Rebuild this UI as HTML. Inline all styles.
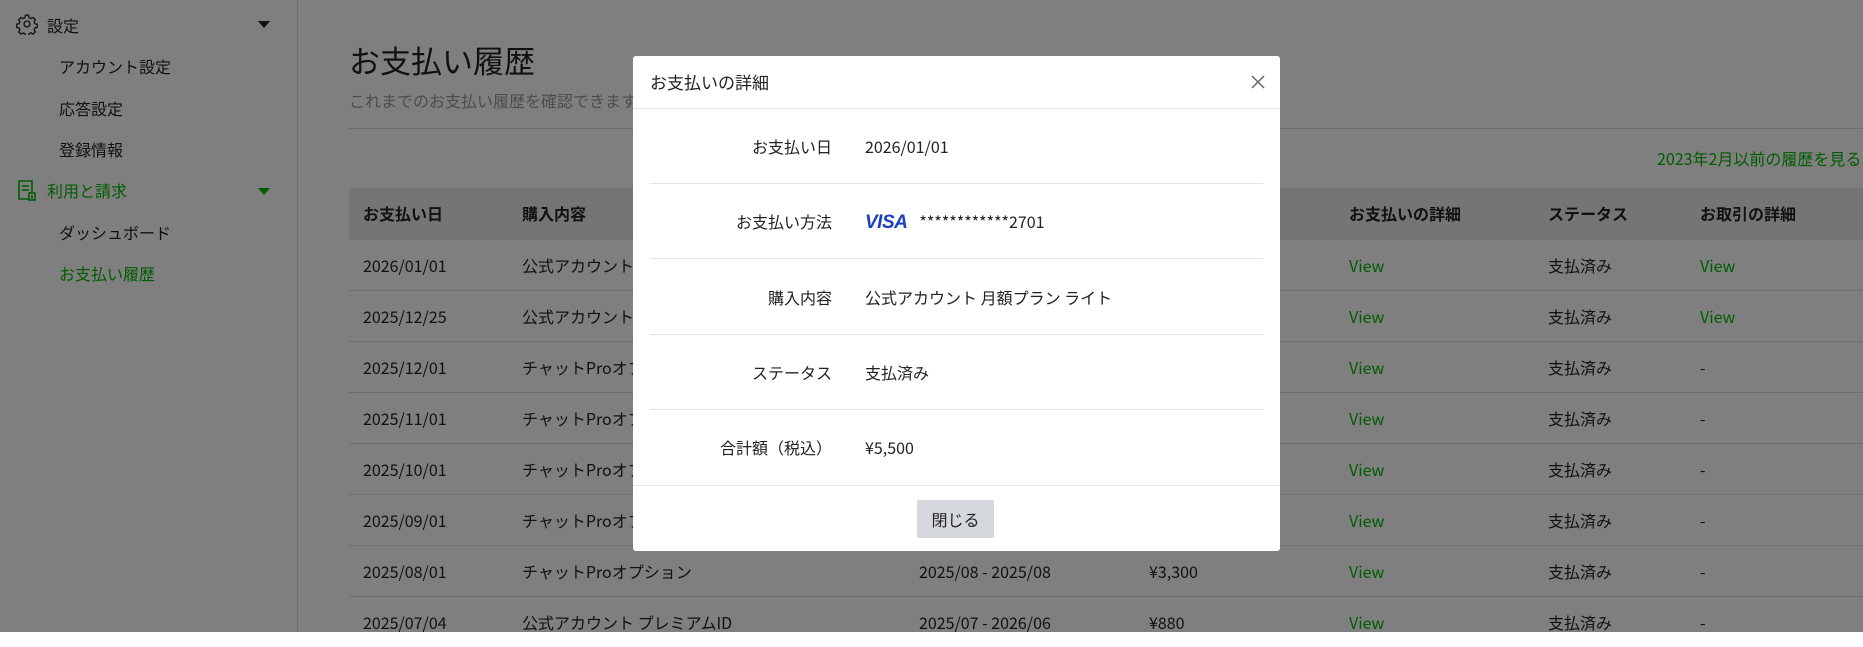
<!DOCTYPE html>
<html><head><meta charset="utf-8"><style>
*{box-sizing:border-box;margin:0;padding:0}
body{width:1863px;height:632px;overflow:hidden;background:#fff;font-family:"Noto Sans CJK JP","Liberation Sans",sans-serif;color:#222;position:relative}
.side{position:absolute;left:0;top:0;width:298px;height:632px;border-right:1px solid #ddd;background:#fff}
.si{position:absolute;font-size:16px;line-height:22px}
.main{position:absolute;left:298px;top:0;right:0;height:632px}
.abs{position:absolute;white-space:nowrap}
.green{color:#00b900}
table{position:absolute;left:51px;top:188px;width:1600px;border-collapse:collapse;font-size:16px;line-height:22px}
th{background:#e6eaee;height:51px;text-align:left;font-weight:bold;padding-left:14px}
td{height:51px;border-top:1px solid #ddd;padding-left:14px;white-space:nowrap}
.ov{position:absolute;inset:0;background:rgba(0,0,0,.5)}
.modal{position:absolute;left:633px;top:56px;width:647px;height:495px;background:#fff;border-radius:3px}
.mh{height:53px;border-bottom:1px solid #e5e5e5;font-size:17px;padding:13px 0 0 17px}
.row{position:absolute;left:17px;width:613px;height:75px;font-size:16px;line-height:22px}
.row .l{position:absolute;right:431px;top:26px;white-space:nowrap;text-align:right}
.row .v{position:absolute;left:215px;top:26px;white-space:nowrap}
.bd{border-bottom:1px solid #e3e3e3}
.foot{position:absolute;left:0;top:429px;width:647px;border-top:1px solid #e8e8e8;height:66px}
.btn{position:absolute;left:284px;top:14px;width:77px;height:38px;background:#d5d9de;border-radius:2px;font-size:16px;text-align:center;line-height:38px}
</style></head><body>
<div class="side">
 <svg class="abs" style="left:16px;top:13px" width="22" height="22" viewBox="0 0 24 24" fill="none" stroke="#333" stroke-width="1.6"><circle cx="12" cy="12" r="3.2"/><path d="M10.3 2.5h3.4l.5 2.6 2 1 2.4-1.2 2.4 2.4-1.2 2.4.9 2 2.6.6v3.4l-2.6.5-.9 2 1.2 2.4-2.4 2.4-2.4-1.2-2 .9-.5 2.6h-3.4l-.5-2.6-2-.9-2.4 1.2-2.4-2.4 1.2-2.4-.9-2-2.6-.5v-3.4l2.6-.6.9-2-1.2-2.4 2.4-2.4 2.4 1.2 2-1z"/></svg>
 <div class="si" style="left:47px;top:14px">設定</div>
 <div class="abs" style="left:258px;top:21px;border:6px solid transparent;border-top:7px solid #222;border-bottom:0"></div>
 <div class="si" style="left:59px;top:55px">アカウント設定</div>
 <div class="si" style="left:59px;top:97px">応答設定</div>
 <div class="si" style="left:59px;top:138px">登録情報</div>
 <svg class="abs" style="left:17px;top:179px" width="20" height="22" viewBox="0 0 20 22" fill="none" stroke="#00b900" stroke-width="1.6"><path d="M13 20H2V2h13v11"/><path d="M5 7h7M5 11h7"/><rect x="12" y="14" width="6" height="7"/><path d="M14 17h2M14 19h2"/></svg>
 <div class="si green" style="left:47px;top:179px">利用と請求</div>
 <div class="abs" style="left:258px;top:188px;border:6px solid transparent;border-top:7px solid #00b900;border-bottom:0"></div>
 <div class="si" style="left:59px;top:221px">ダッシュボード</div>
 <div class="si green" style="left:59px;top:262px">お支払い履歴</div>
</div>
<div class="main">
 <div class="abs" style="left:51px;top:38px;font-size:31px;line-height:44px">お支払い履歴</div>
 <div class="abs" style="left:51px;top:88px;font-size:16px;color:#999">これまでのお支払い履歴を確認できます。</div>
 <div class="abs" style="left:51px;top:128px;width:1600px;border-top:1px solid #ddd"></div>
 <div class="abs green" style="left:1359px;top:146px;font-size:16px">2023年2月以前の履歴を見る</div>
 <table>
 <colgroup><col style="width:159px"><col style="width:397px"><col style="width:230px"><col style="width:200px"><col style="width:199px"><col style="width:152px"><col></colgroup>
 <tr><th>お支払い日</th><th>購入内容</th><th>お支払い期間</th><th>金額</th><th>お支払いの詳細</th><th>ステータス</th><th>お取引の詳細</th></tr>
 <tr><td>2026/01/01</td><td>公式アカウント 月額プラン ライト</td><td>2026/01 - 2026/01</td><td>¥5,500</td><td class="green">View</td><td>支払済み</td><td class="green">View</td></tr>
 <tr><td>2025/12/25</td><td>公式アカウント 月額プラン ライト</td><td>2025/12 - 2025/12</td><td>¥5,500</td><td class="green">View</td><td>支払済み</td><td class="green">View</td></tr>
 <tr><td>2025/12/01</td><td>チャットProオプション</td><td>2025/12 - 2025/12</td><td>¥3,300</td><td class="green">View</td><td>支払済み</td><td>-</td></tr>
 <tr><td>2025/11/01</td><td>チャットProオプション</td><td>2025/11 - 2025/11</td><td>¥3,300</td><td class="green">View</td><td>支払済み</td><td>-</td></tr>
 <tr><td>2025/10/01</td><td>チャットProオプション</td><td>2025/10 - 2025/10</td><td>¥3,300</td><td class="green">View</td><td>支払済み</td><td>-</td></tr>
 <tr><td>2025/09/01</td><td>チャットProオプション</td><td>2025/09 - 2025/09</td><td>¥3,300</td><td class="green">View</td><td>支払済み</td><td>-</td></tr>
 <tr><td>2025/08/01</td><td>チャットProオプション</td><td>2025/08 - 2025/08</td><td>¥3,300</td><td class="green">View</td><td>支払済み</td><td>-</td></tr>
 <tr><td>2025/07/04</td><td>公式アカウント プレミアムID</td><td>2025/07 - 2026/06</td><td>¥880</td><td class="green">View</td><td>支払済み</td><td>-</td></tr>
 </table>
</div>
<div class="ov"></div>
<div class="modal">
 <div class="mh">お支払いの詳細</div>
 <svg class="abs" style="left:617px;top:18px" width="16" height="16" viewBox="0 0 16 16" stroke="#666" stroke-width="1.5"><path d="M2 2l12 12M14 2L2 14"/></svg>
 <div class="row bd" style="top:53px"><div class="l">お支払い日</div><div class="v">2026/01/01</div></div>
 <div class="row bd" style="top:128px"><div class="l">お支払い方法</div><div class="v"><span style="font-family:'Liberation Sans',sans-serif;font-style:italic;font-weight:900;color:#1a3fbf;font-size:19px;letter-spacing:-.5px">VISA</span><span style="margin-left:12px">************2701</span></div></div>
 <div class="row bd" style="top:204px"><div class="l">購入内容</div><div class="v">公式アカウント 月額プラン ライト</div></div>
 <div class="row bd" style="top:279px"><div class="l">ステータス</div><div class="v">支払済み</div></div>
 <div class="row" style="top:354px"><div class="l">合計額（税込）</div><div class="v">¥5,500</div></div>
 <div class="foot"><div class="btn">閉じる</div></div>
</div>
</body></html>
